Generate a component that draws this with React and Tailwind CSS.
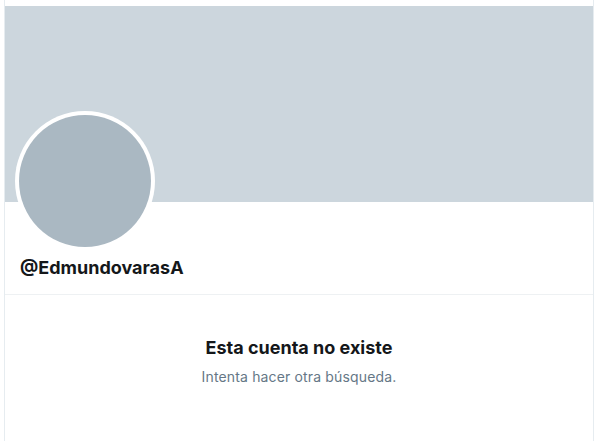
import React from 'react';

const App = () => {
  return (
    <div className="min-h-[441px] bg-white pl-[4px]" style={{ fontFamily: 'Inter, "Liberation Sans", Arial, sans-serif' }}>
      <div className="w-[590px] min-h-[441px] border-l border-r border-[#e6ecf0] pt-[6px]">
        <div className="h-[196px] bg-[#ccd6dd]" />
        <div className="relative px-[15px]">
          <div className="absolute left-[10px] -top-[91px] w-[140px] h-[140px] rounded-full bg-white p-[4px]">
            <div className="w-full h-full rounded-full bg-[#aab8c2]" />
          </div>
          <div className="h-[50px]" />
          <div className="pt-[5px] pb-[15px] text-[18px] font-bold text-[#14171a] leading-[22px]">@EdmundovarasA</div>
        </div>
        <div className="border-t border-[#eef1f3]" />
        <div className="flex flex-col items-center pt-[42px]">
          <div className="text-[18px] font-bold text-[#14171a] leading-[22px]">Esta cuenta no existe</div>
          <div className="mt-[9px] text-[14px] tracking-[0.15px] text-[#657786] leading-[18px]">Intenta hacer otra búsqueda.</div>
        </div>
      </div>
    </div>
  );
};

export default App;
